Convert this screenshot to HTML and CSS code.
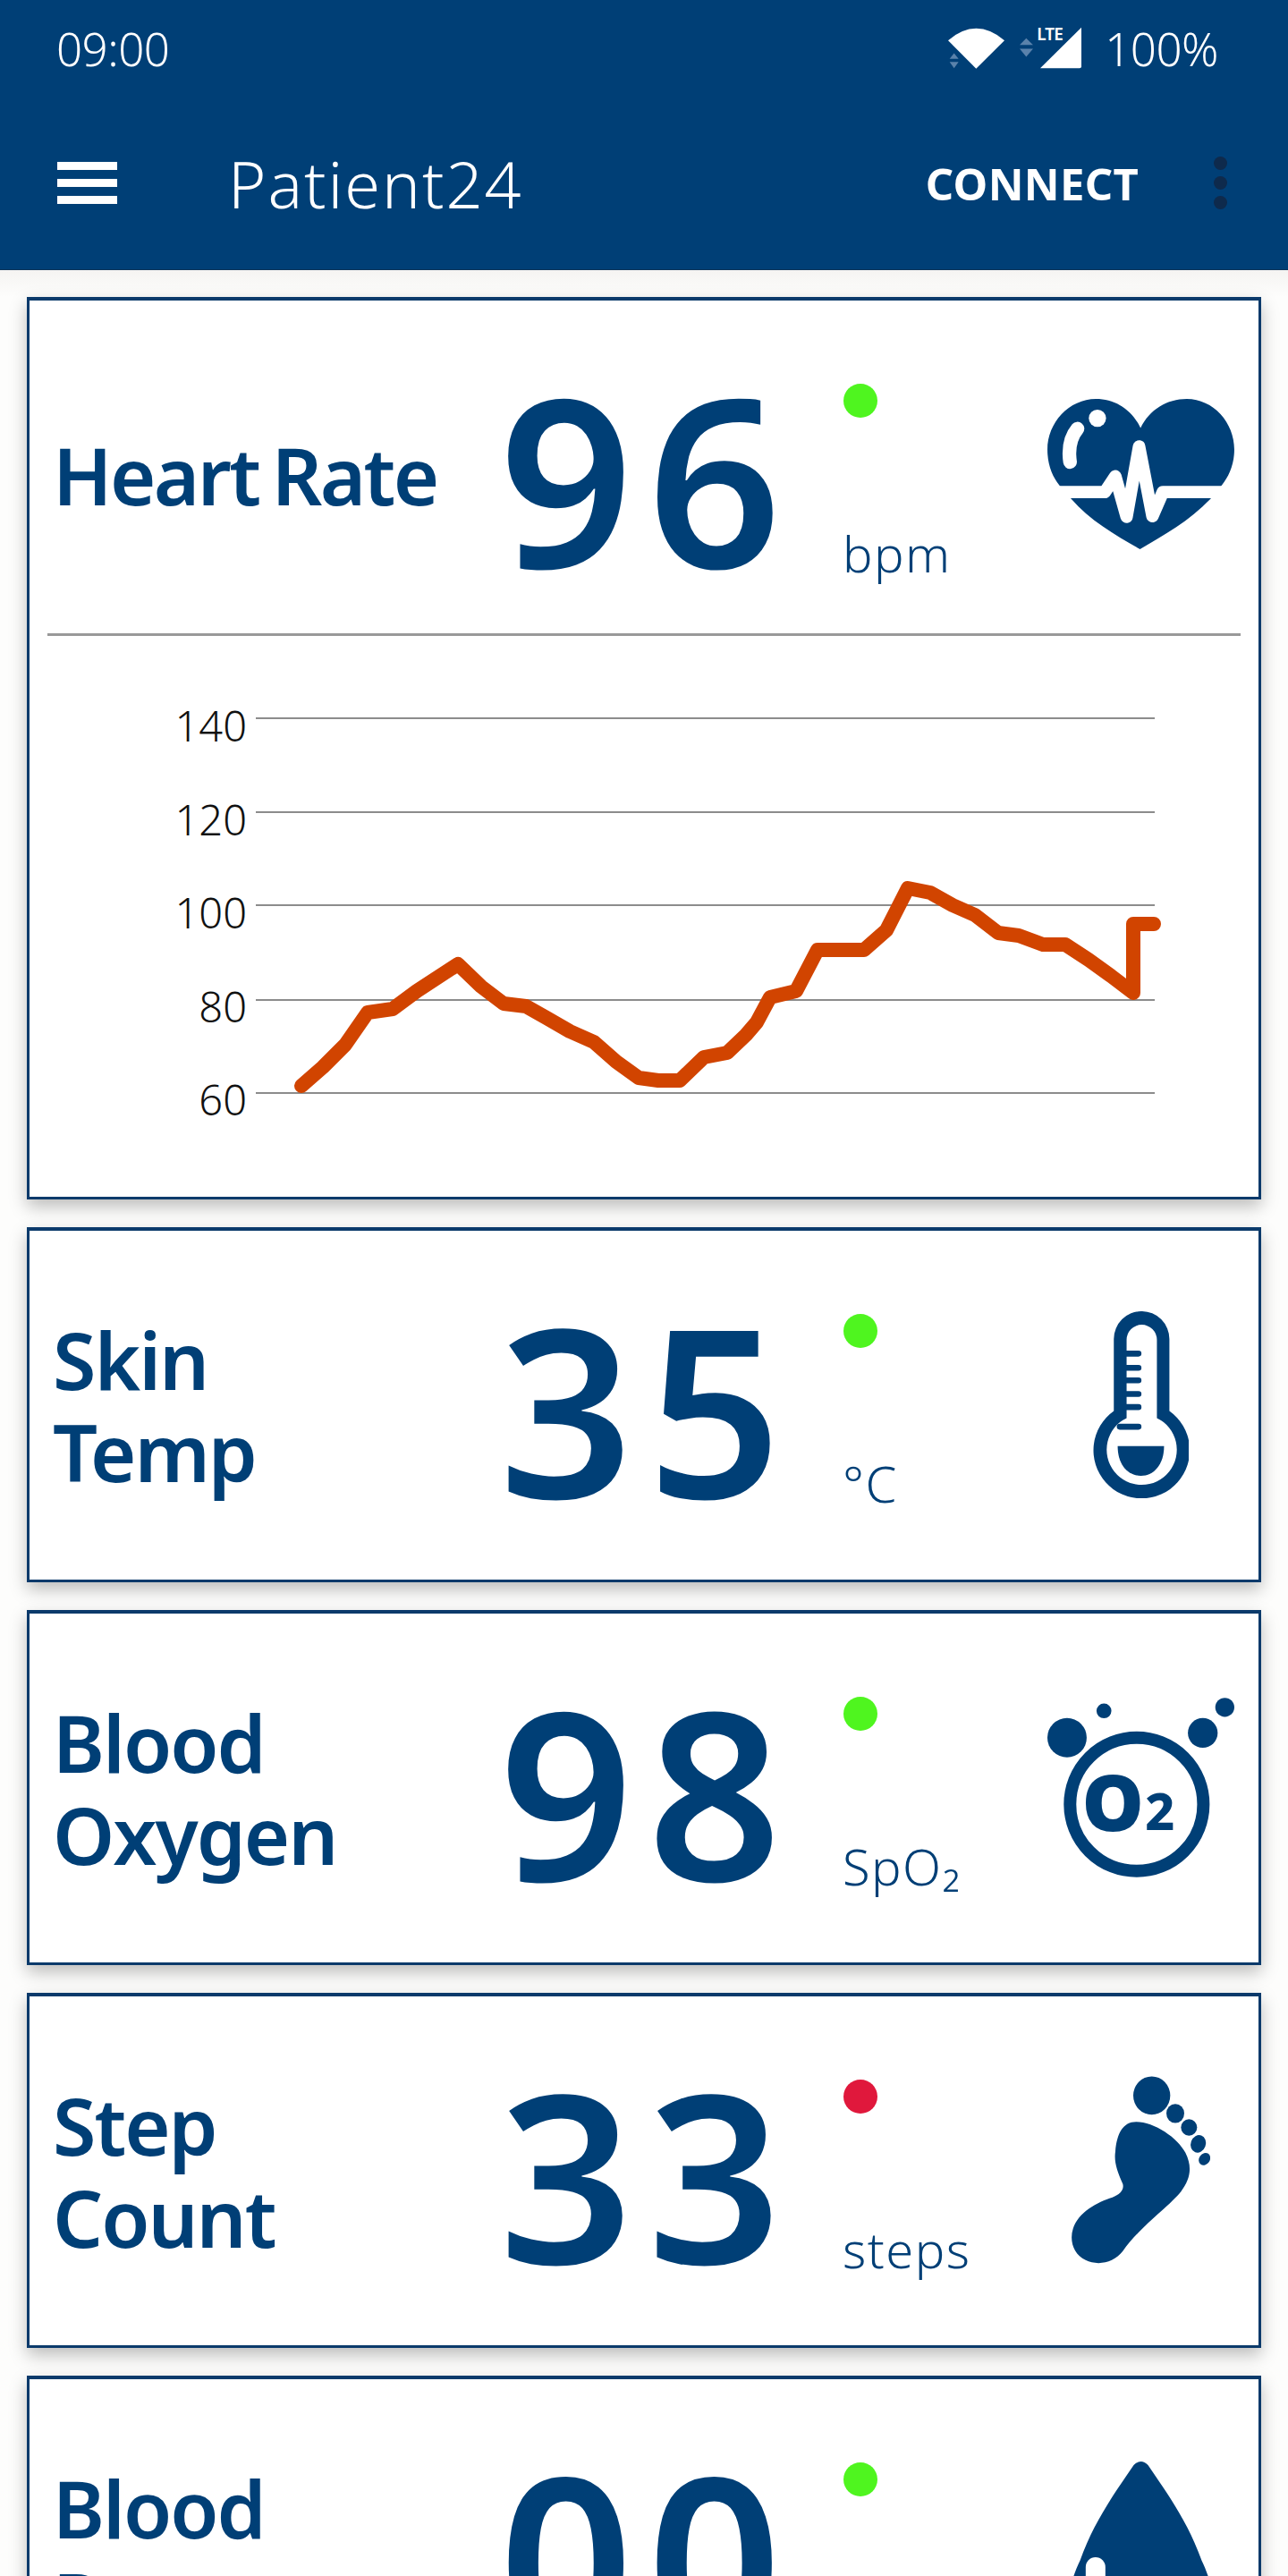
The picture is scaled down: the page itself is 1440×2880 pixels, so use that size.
FILE: index.html
```html
<!DOCTYPE html>
<html lang="en">
<head>
<meta charset="UTF-8" />
<meta name="viewport" content="width=device-width, initial-scale=1" />
<title>Patient24</title>
<link rel="stylesheet" href="styles.css">
</head>
<body>
  <div class="app">
    <header class="appbar">
      <div class="statusbar">
        <span class="clock">09:00</span>
        <div class="status-right">
          <svg class="net-icons" viewBox="183 60 447 170">
            <path class="net-solid" d="M183 135 Q277 55 372 135 L277 230 Z"/>
            <path class="net-faint" d="M188 197 H218 L203 178 Z M188 207 H218 L203 228 Z M423 150 H468 L445 128 Z M423 163 H468 L445 190 Z"/>
            <path class="net-solid" d="M630 92 V222 Q630 228 624 228 H492 Z"/>
            <text class="net-lte" x="481" y="134">LTE</text>
          </svg>
          <span class="battery">100%</span>
        </div>
      </div>
      <div class="toolbar">
        <div class="burger"><span></span><span></span><span></span></div>
        <div class="app-title">Patient24</div>
        <div class="connect">CONNECT</div>
        <div class="overflow"><span></span><span></span><span></span></div>
      </div>
    </header>

    <main class="cards">
      <section class="card">
        <div class="row">
          <div class="label label-one">Heart Rate</div>
          <div class="value">96</div>
          <div class="status"><span class="dot"></span><span class="unit">bpm</span></div>
          <div class="icon">
            <svg class="ic-heart" viewBox="152 80 628 505">
              <path class="ic-fill" d="M465 178 C495 115 555 80 620 80 C710 80 780 160 780 250 C780 300 762 340 738 370 L700 416 C630 490 540 540 463 585 C385 540 295 490 232 416 L192 370 C168 340 152 300 152 250 C152 160 225 80 315 80 C380 80 435 115 465 178 Z"/>
              <path class="ic-pulse" d="M150 393 H345 L380 340 L418 476 L460 240 L505 474 L540 393 H790"/>
              <circle class="ic-white" cx="320" cy="145" r="29"/>
              <path class="ic-shine" d="M253 180 Q218 222 228 292"/>
            </svg>
          </div>
        </div>
        <div class="divider"></div>
        <svg class="chart" viewBox="33 711 1374 627">
          <g class="grid">
            <line x1="286" y1="803" x2="1291" y2="803"/>
            <line x1="286" y1="908" x2="1291" y2="908"/>
            <line x1="286" y1="1012" x2="1291" y2="1012"/>
            <line x1="286" y1="1118" x2="1291" y2="1118"/>
            <line x1="286" y1="1222" x2="1291" y2="1222"/>
          </g>
          <g class="axis">
            <text x="276" y="829">140</text>
            <text x="276" y="934">120</text>
            <text x="276" y="1038">100</text>
            <text x="276" y="1143">80</text>
            <text x="276" y="1247">60</text>
          </g>
          <polyline class="trace" points="337,1214 361,1193 386,1168 411,1132 439,1128 466,1108 512,1078 538,1103 563,1122 588,1125 611,1138 637,1153 664,1165 689,1187 714,1205 736,1208 760,1208 787,1182 813,1177 834,1157 846,1143 861,1115 890,1108 914,1062 966,1062 991,1040 1015,993 1040,998 1065,1012 1090,1023 1116,1043 1139,1046 1166,1056 1191,1056 1217,1073 1242,1091 1267,1110 1267,1033 1290,1033"/>
        </svg>
      </section>

      <section class="card">
        <div class="row">
          <div class="label">Skin<br>Temp</div>
          <div class="value">35</div>
          <div class="status"><span class="dot"></span><span class="unit">°C</span></div>
          <div class="icon">
            <svg class="ic-therm" viewBox="275 105 322 628">
              <path class="ic-fill" fill-rule="evenodd" d="M345 440 V198 A93 93 0 0 1 532 198 V440 A162 162 0 1 1 345 440 Z M388 464 V201 A51 51 0 0 1 490 201 V464 A118 118 0 1 1 388 464 Z"/>
              <path class="ic-ticks" d="M385 247 H428 M385 295 H428 M385 337 H428 M385 383 H428 M385 427 H428 M365 493 H428"/>
              <path class="ic-fill" d="M358 558 H514 C514 620 480 658 436 658 C392 658 358 620 358 558 Z"/>
            </svg>
          </div>
        </div>
      </section>

      <section class="card">
        <div class="row">
          <div class="label">Blood<br>Oxygen</div>
          <div class="value">98</div>
          <div class="status"><span class="dot"></span><span class="unit">SpO₂</span></div>
          <div class="icon">
            <svg class="ic-o2" viewBox="122 52 628 603">
              <circle class="ic-ring" cx="422" cy="410" r="224"/>
              <circle class="ic-fill" cx="188" cy="186" r="66"/>
              <circle class="ic-fill" cx="312" cy="96" r="25"/>
              <circle class="ic-fill" cx="644" cy="170" r="50"/>
              <circle class="ic-fill" cx="718" cy="84" r="32"/>
              <text class="ic-o" x="238" y="498">O</text>
              <text class="ic-two" x="450" y="495">2</text>
            </svg>
          </div>
        </div>
      </section>

      <section class="card">
        <div class="row">
          <div class="label">Step<br>Count</div>
          <div class="value">33</div>
          <div class="status"><span class="dot dot-red"></span><span class="unit">steps</span></div>
          <div class="icon">
            <svg class="ic-foot" viewBox="203 33 465 629">
              <ellipse class="ic-fill" cx="472" cy="98" rx="62" ry="64"/>
              <ellipse class="ic-fill" cx="551" cy="158" rx="30" ry="32"/>
              <ellipse class="ic-fill" cx="597" cy="205" rx="27" ry="28"/>
              <ellipse class="ic-fill" cx="628" cy="260" rx="25" ry="30" transform="rotate(20 628 260)"/>
              <ellipse class="ic-fill" cx="649" cy="311" rx="18" ry="22" transform="rotate(35 649 311)"/>
              <path class="ic-fill" d="M420 186 C480 186 560 240 585 290 C610 340 600 380 570 420 C530 470 430 540 375 620 C345 660 290 670 250 650 C210 630 195 585 208 545 C225 490 290 455 340 440 C365 430 380 415 375 395 C355 350 345 320 350 285 C355 225 375 186 420 186 Z"/>
            </svg>
          </div>
        </div>
      </section>

      <section class="card">
        <div class="row">
          <div class="label">Blood<br>Pressure</div>
          <div class="value">00</div>
          <div class="status"><span class="dot"></span><span class="unit">mmHg</span></div>
          <div class="icon">
            <svg class="ic-drop" viewBox="192 85 488 660">
              <path class="ic-fill" d="M412 100 Q436 76 460 100 C510 175 590 280 640 420 C665 470 680 530 680 580 C680 670 570 745 436 745 C302 745 192 670 192 580 C192 530 207 470 232 420 C282 280 362 175 412 100 Z"/>
              <path class="ic-shine-wide" d="M284 442 V600"/>
            </svg>
          </div>
        </div>
      </section>
    </main>
  </div>
</body>
</html>
```

FILE: styles.css
```css
/* Reset y fuente */
html, body {
  margin: 0;
  padding: 0;
}
body {
  font-family: "Noto Sans", "Open Sans", sans-serif;
  background: #fff;
  color: #003f76;
}

.app {
  width: 1440px;
  height: 2880px;
  overflow: hidden;
  background: #fdfdfc;
}

/* Barra superior */
.appbar {
  height: 302px;
  background: #003f76;
  color: #fff;
  border-bottom: 1px solid #0a3358;
  box-sizing: border-box;
}
.statusbar {
  height: 108px;
  display: flex;
  align-items: center;
  justify-content: space-between;
  padding: 0 78px 0 63px;
}
.clock, .battery {
  font-size: 51px;
  font-weight: 300;
  letter-spacing: -0.5px;
}
.status-right {
  display: flex;
  align-items: center;
  gap: 26px;
}
.net-icons {
  width: 149px;
  height: 57px;
  margin-bottom: 11px;
}
.net-solid { fill: #fff; }
.net-faint { fill: #5a82ab; }
.net-lte {
  fill: #fff;
  font-size: 57px;
  font-weight: 600;
  letter-spacing: -3px;
}

.toolbar {
  height: 193px;
  display: flex;
  align-items: center;
  padding: 0 68px 0 64px;
}
.burger {
  width: 67px;
  display: flex;
  flex-direction: column;
  gap: 10px;
}
.burger span {
  height: 9px;
  background: #fff;
}
.app-title {
  margin-left: 124px;
  font-size: 72px;
  font-weight: 350;
  letter-spacing: 2px;
}
.connect {
  margin-left: auto;
  font-size: 49px;
  font-weight: 700;
  letter-spacing: 0.3px;
}
.overflow {
  margin-left: 84px;
  display: flex;
  flex-direction: column;
  gap: 7px;
}
.overflow span {
  width: 15px;
  height: 15px;
  border-radius: 50%;
  background: #0e2a4c;
}

/* Tarjetas */
.cards {
  padding: 30px 30px 0;
  display: flex;
  flex-direction: column;
  gap: 31px;
  background: linear-gradient(#f5f4f2, #fdfdfc 30px);
}
.card {
  flex: none;
  min-height: 397px;
  box-sizing: border-box;
  background: #fff;
  border: 3px solid #0b3a6b;
  border-top-width: 4px;
  box-shadow: 0 8px 18px rgba(0,0,0,0.26);
}
.row {
  height: 372px;
  box-sizing: border-box;
  padding: 16px 0 0 26px;
  display: grid;
  grid-template-columns: 499px 384px 187px 1fr;
  align-items: center;
}
.label {
  margin-top: 3px;
  font-size: 88px;
  line-height: 103px;
  font-weight: 600;
  letter-spacing: -2px;
}
.label-one { word-spacing: -6px; letter-spacing: -2.6px; }
.value {
  margin-top: 8px;
  font-size: 262px;
  line-height: 1;
  font-weight: 600;
  letter-spacing: 16px;
}
.status {
  margin-top: 14px;
  height: 216px;
  display: flex;
  flex-direction: column;
  justify-content: space-between;
  align-items: flex-start;
}
.dot {
  width: 38px;
  height: 38px;
  margin-left: 1px;
  border-radius: 50%;
  background: #4ff51f;
}
.dot-red { background: #e0183c; }
.unit {
  font-size: 56px;
  line-height: 54px;
  font-weight: 350;
  letter-spacing: 1.5px;
}

/* Iconos */
.icon {
  display: flex;
  justify-content: center;
  width: 292px;
}
.icon svg { display: block; }
.ic-heart { width: 209px; height: 168px; }
.ic-therm { width: 107px; height: 209px; }
.ic-o2 { width: 209px; height: 201px; }
.ic-foot { width: 155px; height: 210px; }
.ic-drop { width: 163px; height: 220px; margin-top: 14px; }
.ic-fill { fill: #003f76; }
.ic-white { fill: #fff; }
.ic-pulse {
  fill: none;
  stroke: #fff;
  stroke-width: 42;
  stroke-linejoin: round;
}
.ic-shine, .ic-shine-wide {
  fill: none;
  stroke: #fff;
  stroke-width: 46;
  stroke-linecap: round;
}
.ic-shine-wide { stroke-width: 66; }
.ic-ticks {
  fill: none;
  stroke: #003f76;
  stroke-width: 20;
  stroke-linecap: round;
}
.ic-ring {
  fill: none;
  stroke: #003f76;
  stroke-width: 42;
}
.ic-o, .ic-two {
  fill: #003f76;
  font-weight: 900;
}
.ic-o { font-size: 262px; }
.ic-two { font-size: 172px; font-weight: 800; }

/* Grafica */
.divider {
  height: 3px;
  margin: 0 20px;
  background: #999;
}
.chart {
  display: block;
  width: 1374px;
  height: 627px;
}
.grid line {
  stroke: #8c8c8c;
  stroke-width: 2;
}
.axis text {
  font-size: 47px;
  font-weight: 300;
  fill: #111;
  text-anchor: end;
}
.trace {
  fill: none;
  stroke: #d14400;
  stroke-width: 16;
  stroke-linejoin: round;
  stroke-linecap: round;
}
```
